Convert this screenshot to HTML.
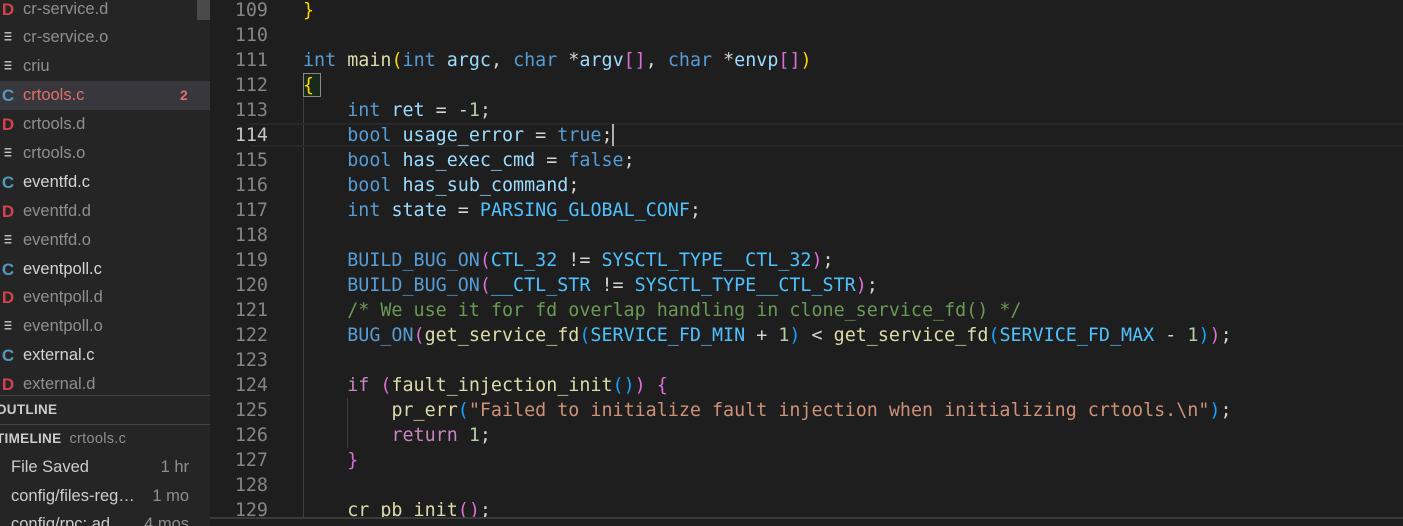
<!DOCTYPE html>
<html><head><meta charset="utf-8"><style>
*{margin:0;padding:0;box-sizing:border-box}
body{width:1403px;height:526px;overflow:hidden;background:#1e1e1e;position:relative;font-family:"Liberation Sans",sans-serif}
#side{position:absolute;left:0;top:0;width:210px;height:526px;background:#252526;overflow:hidden}
.row{position:absolute;left:0;width:210px;height:29px;font-size:16.5px;line-height:29px;color:#8f8f8f;white-space:nowrap}
.row .ic{position:absolute;left:0;width:16px;text-align:center;font-weight:bold;font-size:17px}
.row .nm{position:absolute;left:23px}
.D{color:#d4424d}.C{color:#519aba}
.row .L{color:#c8c8c8;font-size:20px;font-weight:normal;transform:scaleX(.7)}
.w{color:#d4d4d4!important}
.hd{position:absolute;left:-4px;font-size:13.5px;font-weight:bold;color:#cccccc;letter-spacing:.3px}
.tl{position:absolute;left:11px;width:180px;font-size:16.5px;color:#cccccc;white-space:nowrap}
.tl span{position:absolute;right:0;color:#8f8f8f}
#code{position:absolute;left:210px;top:0;width:1193px;height:517px;overflow:hidden;font-family:"DejaVu Sans Mono",monospace;font-size:18.36px}
.ln{position:absolute;left:0;width:58px;text-align:right;color:#858585;height:25px;line-height:25px}
.cl{position:absolute;left:93px;white-space:pre;height:25px;line-height:25px;color:#d4d4d4}
.k{color:#569cd6}.f{color:#dcdcaa}.v{color:#9cdcfe}.n{color:#b5cea8}.s{color:#ce9178}.c{color:#6a9955}.m{color:#4fc1ff}.p{color:#c586c0}
.y{color:#ffd700}.pk{color:#da70d6}.b{color:#179fff}
</style></head><body>
<div id="side">
<div style="position:absolute;left:197px;top:0;width:13px;height:20px;background:#4a4a4a"></div>
<div class="row" style="top:-5px"><span class="ic D">D</span><span class="nm">cr-service.d</span></div>
<div class="row" style="top:23px"><span class="ic L">&#8801;</span><span class="nm">cr-service.o</span></div>
<div class="row" style="top:52px"><span class="ic L">&#8801;</span><span class="nm">criu</span></div>
<div class="row" style="top:81px;background:#37373d"><span class="ic C">C</span><span class="nm" style="color:#e2706a">crtools.c</span><span style="position:absolute;left:180px;color:#e2706a;font-weight:bold;font-size:14px">2</span></div>
<div class="row" style="top:110px"><span class="ic D">D</span><span class="nm">crtools.d</span></div>
<div class="row" style="top:139px"><span class="ic L">&#8801;</span><span class="nm">crtools.o</span></div>
<div class="row" style="top:168px"><span class="ic C">C</span><span class="nm w">eventfd.c</span></div>
<div class="row" style="top:197px"><span class="ic D">D</span><span class="nm">eventfd.d</span></div>
<div class="row" style="top:226px"><span class="ic L">&#8801;</span><span class="nm">eventfd.o</span></div>
<div class="row" style="top:255px"><span class="ic C">C</span><span class="nm w">eventpoll.c</span></div>
<div class="row" style="top:283px"><span class="ic D">D</span><span class="nm">eventpoll.d</span></div>
<div class="row" style="top:312px"><span class="ic L">&#8801;</span><span class="nm">eventpoll.o</span></div>
<div class="row" style="top:341px"><span class="ic C">C</span><span class="nm w">external.c</span></div>
<div class="row" style="top:370px"><span class="ic D">D</span><span class="nm">external.d</span></div>
<div style="position:absolute;left:0;top:395px;width:210px;height:1px;background:#444"></div>
<div class="hd" style="top:402px">OUTLINE</div>
<div style="position:absolute;left:0;top:424px;width:210px;height:1px;background:#444"></div>
<div class="hd" style="top:431px">TIMELINE <span style="font-weight:normal;color:#8f8f8f;font-size:14.5px;margin-left:4px">crtools.c</span></div>
<div class="tl" style="top:458px">File Saved<span style="right:2px">1 hr</span></div>
<div class="tl" style="top:487px;width:190px">config/files-reg… <span style="right:12px">1 mo</span></div>
<div class="tl" style="top:515px">config/rpc: ad<span style="right:2px">4 mos</span></div>
</div>
<div id="code">
<div style="position:absolute;left:93px;top:73px;width:1px;height:450px;background:#404040"></div>
<div style="position:absolute;left:137px;top:398px;width:1px;height:50px;background:#404040"></div>
<div style="position:absolute;left:93px;top:73px;width:18px;height:24px;border:1px solid #888;background:#1a2a1a"></div>
<div style="position:absolute;left:40px;top:123px;width:1160px;height:24px;border-top:2px solid #282828;border-bottom:2px solid #282828"></div>
<div style="position:absolute;left:402px;top:124px;width:2px;height:22px;background:#aeafad"></div>
<div id="lines"></div>
</div>
<div style="position:absolute;left:210px;top:517px;width:1193px;height:9px;background:#1e1e1e;border-top:2px solid #3a3a3a"></div>
<script>
var L=[
'<span class="y">}</span>','',
'<span class="k">int</span> <span class="f">main</span><span class="y">(</span><span class="k">int</span> <span class="v">argc</span>, <span class="k">char</span> *<span class="v">argv</span><span class="pk">[]</span>, <span class="k">char</span> *<span class="v">envp</span><span class="pk">[]</span><span class="y">)</span>',
'<span class="y">{</span>',
'    <span class="k">int</span> <span class="v">ret</span> = -<span class="n">1</span>;',
'    <span class="k">bool</span> <span class="v">usage_error</span> = <span class="k">true</span>;',
'    <span class="k">bool</span> <span class="v">has_exec_cmd</span> = <span class="k">false</span>;',
'    <span class="k">bool</span> <span class="v">has_sub_command</span>;',
'    <span class="k">int</span> <span class="v">state</span> = <span class="m">PARSING_GLOBAL_CONF</span>;','',
'    <span class="k">BUILD_BUG_ON</span><span class="pk">(</span><span class="m">CTL_32</span> != <span class="m">SYSCTL_TYPE__CTL_32</span><span class="pk">)</span>;',
'    <span class="k">BUILD_BUG_ON</span><span class="pk">(</span><span class="m">__CTL_STR</span> != <span class="m">SYSCTL_TYPE__CTL_STR</span><span class="pk">)</span>;',
'    <span class="c">/* We use it for fd overlap handling in clone_service_fd() */</span>',
'    <span class="k">BUG_ON</span><span class="pk">(</span><span class="f">get_service_fd</span><span class="b">(</span><span class="m">SERVICE_FD_MIN</span> + <span class="n">1</span><span class="b">)</span> &lt; <span class="f">get_service_fd</span><span class="b">(</span><span class="m">SERVICE_FD_MAX</span> - <span class="n">1</span><span class="b">)</span><span class="pk">)</span>;','',
'    <span class="p">if</span> <span class="pk">(</span><span class="f">fault_injection_init</span><span class="b">()</span><span class="pk">)</span> <span class="pk">{</span>',
'        <span class="f">pr_err</span><span class="b">(</span><span class="s">"Failed to initialize fault injection when initializing crtools.\\n"</span><span class="b">)</span>;',
'        <span class="p">return</span> <span class="n">1</span>;',
'    <span class="pk">}</span>','',
'    <span class="f">cr_pb_init</span><span class="pk">()</span>;'];
var h='';for(var i=0;i<L.length;i++){var t=-2+i*25;h+='<div class="ln" style="top:'+t+'px'+(i==5?';color:#c6c6c6':'')+'">'+(109+i)+'</div><div class="cl" style="top:'+t+'px">'+L[i]+'</div>';}
document.getElementById('lines').innerHTML=h;
</script>
</body></html>
